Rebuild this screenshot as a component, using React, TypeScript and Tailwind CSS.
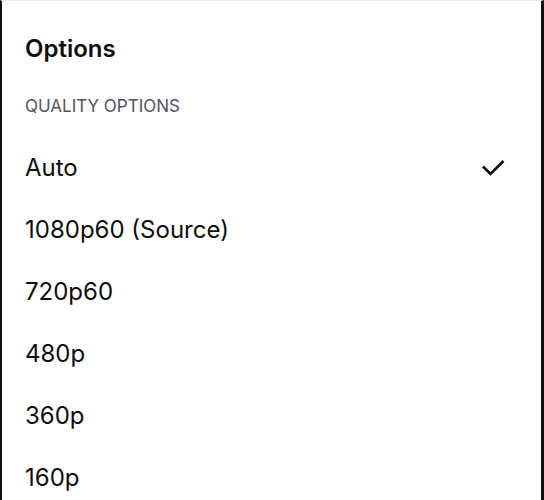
const QUALITIES = ["Auto", "1080p60 (Source)", "720p60", "480p", "360p", "160p"];

function CheckMark() {
  return (
    <svg width="24" height="18" viewBox="0 0 24 18" fill="none" className="shrink-0">
      <path
        d="M2 7.5 9.5 15 22.5 2"
        stroke="#0e0e10"
        strokeWidth="2.6"
        strokeLinecap="butt"
        strokeLinejoin="miter"
      />
    </svg>
  );
}

export default function App() {
  const selected = "Auto";

  return (
    <div
      className="h-[500px] w-[544px] overflow-hidden bg-white border-l-2 border-r-[3px] border-t border-[#0e0e10] border-t-[#efeff1] text-[#0e0e10]"
      style={{ fontFamily: 'Inter, "Liberation Sans", sans-serif' }}
    >
      <div className="pt-[32px] pl-[23px]">
        <h2 className="text-[24px] leading-[32px] font-semibold">Options</h2>
        <p className="mt-[30px] text-[17px] leading-[22px] text-[#53535f]">QUALITY OPTIONS</p>
      </div>

      <ul className="mt-[20px]">
        {QUALITIES.map((q) => (
          <li key={q} className="flex h-[62px] items-center justify-between pl-[23px] pr-[36px]">
            <span className="text-[24px] leading-[30px]">{q}</span>
            {q === selected && <CheckMark />}
          </li>
        ))}
      </ul>
    </div>
  );
}
